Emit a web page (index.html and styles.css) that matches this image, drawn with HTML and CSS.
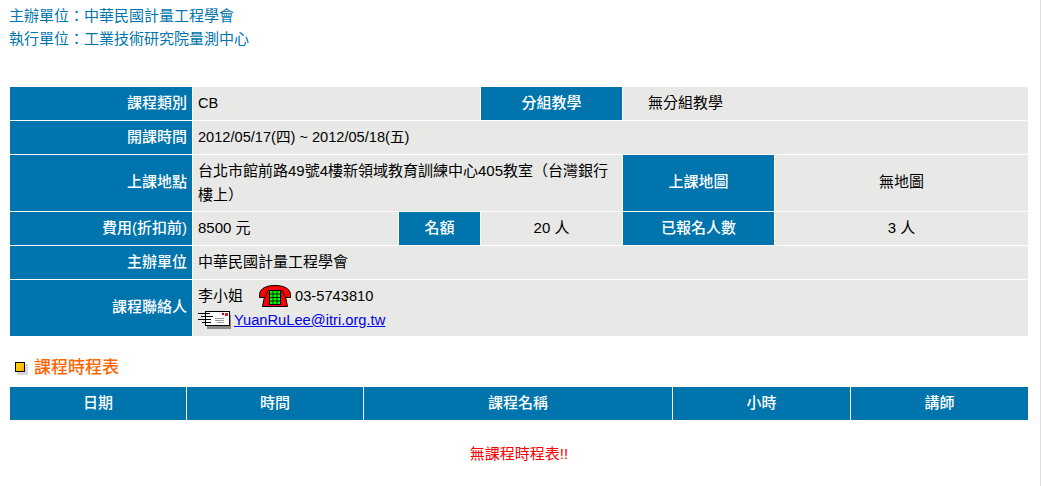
FILE: index.html
```html
<!DOCTYPE html>
<html lang="zh-Hant">
<head>
<meta charset="utf-8">
<title>課程資訊</title>
<link rel="stylesheet" href="styles.css">
</head>
<body>
<main class="page">
  <div class="org">
    <p>主辦單位：中華民國計量工程學會</p>
    <p>執行單位：工業技術研究院量測中心</p>
  </div>
  <table class="grid info">
    <colgroup>
      <col class="c1"><col class="c2"><col class="c3"><col class="c4"><col class="c5"><col class="c6">
    </colgroup>
    <tr class="r33">
      <th class="right">課程類別</th>
      <td colspan="2" class="latin">CB</td>
      <th>分組教學</th>
      <td colspan="2" class="indent">無分組教學</td>
    </tr>
    <tr class="r33">
      <th class="right">開課時間</th>
      <td colspan="5" class="latin">2012/05/17(四) ~ 2012/05/18(五)</td>
    </tr>
    <tr class="r56">
      <th class="right">上課地點</th>
      <td colspan="3" class="multi">台北市館前路49號4樓新領域教育訓練中心405教室（台灣銀行樓上）</td>
      <th>上課地圖</th>
      <td class="center">無地圖</td>
    </tr>
    <tr class="r33">
      <th class="right">費用(折扣前)</th>
      <td>8500 元</td>
      <th>名額</th>
      <td class="center">20 人</td>
      <th>已報名人數</th>
      <td class="center">3 人</td>
    </tr>
    <tr class="r33">
      <th class="right">主辦單位</th>
      <td colspan="5">中華民國計量工程學會</td>
    </tr>
    <tr class="r56">
      <th class="right">課程聯絡人</th>
      <td colspan="5" class="multi">
        <div class="contact">
          <span>李小姐</span>
          <svg class="phone" viewBox="0 0 32 22" width="32" height="22" aria-hidden="true">
            <path d="M.5 9.500 C1 3 8 .5 16 .5 C24 .5 31 3 31.500 9.500 L31.500 12.500 L24 12.500 L23 8 L9 8 L8 12.500 L.5 12.500 Z" fill="#f00" stroke="#000"/>
            <path d="M9 5.500 L23 5.500 L27 14 L28.500 21.500 L3.500 21.500 L5 14 Z" fill="#f00" stroke="#000"/>
            <rect x="10.500" y="5.500" width="11" height="14" fill="#0f0" stroke="#000"/>
            <path d="M14 6v13M18 6v13M11 9h10M11 12.500h10M11 16h10" stroke="#000" stroke-width=".8" fill="none"/>
          </svg>
          <span class="num">03-5743810</span>
        </div>
        <div class="contact mail">
          <svg class="envelope" viewBox="0 0 33 18" width="33" height="18" aria-hidden="true">
            <rect x="9" y="4" width="24" height="14" fill="#8a8a8a"/>
            <rect x="7.500" y=".5" width="24" height="14" fill="#fff" stroke="#000"/>
            <path d="M0 2.500h12M3 5.500h12M0 8.500h13M4 11.500h9" stroke="#000" fill="none"/>
            <path d="M17 7.500h9M17 9.500h9M19 11.500h7" stroke="#999" fill="none"/>
            <rect x="24" y="2" width="2" height="2" fill="#b00"/>
            <rect x="27" y="2" width="3" height="3" fill="#d22"/>
          </svg>
          <a class="num" href="#">YuanRuLee@itri.org.tw</a>
        </div>
      </td>
    </tr>
  </table>
  <h2 class="section">
    <svg class="bullet" viewBox="0 0 14 14" width="14" height="14" aria-hidden="true">
      <defs>
        <linearGradient id="gold" x1="0" y1="0" x2="1" y2="1">
          <stop offset="0" stop-color="#ffdc00"/>
          <stop offset="1" stop-color="#ffa800"/>
        </linearGradient>
      </defs>
      <rect x="3" y="3" width="11" height="11" fill="#d8d8d8"/>
      <rect x="1.500" y="1.500" width="9" height="9" fill="url(#gold)" stroke="#000"/>
    </svg>
    <span>課程時程表</span>
  </h2>
  <table class="grid schedule">
    <colgroup>
      <col class="s1"><col class="s2"><col class="s3"><col class="s4"><col class="s5">
    </colgroup>
    <tr class="r33">
      <th>日期</th><th>時間</th><th>課程名稱</th><th>小時</th><th>講師</th>
    </tr>
  </table>
  <p class="empty">無課程時程表!!</p>
</main>
</body>
</html>
```
FILE: styles.css
```css
html, body {
  margin: 0;
  padding: 0;
  background: #fff;
}
body {
  font-family: "Liberation Sans", "Noto Sans CJK TC", sans-serif;
  font-size: 15px;
  color: #000;
}
.page {
  box-sizing: border-box;
  width: 1041px;
  height: 486px;
  overflow: hidden;
  border-right: 1px solid #dedede;
  padding: 4px 0 0 10px;
}
.org {
  color: #0074ad;
  font-size: 15px;
  line-height: 23px;
  height: 82px;
  margin-left: -1px;
}
.org p { margin: 0; }
.num { font-size: 14.7px; }
.grid {
  table-layout: fixed;
  border-collapse: separate;
  border-spacing: 1px;
  width: 1020px;
  margin-left: -1px;
}
.grid th, .grid td {
  padding: 0 5px 2px;
  font-size: 15px;
  font-weight: normal;
  line-height: 24px;
  overflow: hidden;
}
.grid th {
  background: #0074ad;
  color: #fff;
  text-align: center;
  font-weight: 500;
}
.grid td { background: #e8e8e6; }
.grid td.latin { font-size: 14.6px; }
.grid th.right { text-align: right; }
.grid td.center { text-align: center; }
.grid td.indent { padding-left: 25px; }
.grid td.multi { padding-bottom: 0; }
.r33 { height: 33px; }
.r56 { height: 56px; }
.c1 { width: 182px; }
.c2 { width: 205px; }
.c3 { width: 81px; }
.c4 { width: 141px; }
.c5 { width: 151px; }
.c6 { width: 253px; }
.s1 { width: 176px; }
.s2 { width: 176px; }
.s3 { width: 308px; }
.s4 { width: 177px; }
.s5 { width: 177px; }
.contact {
  display: flex;
  align-items: center;
  height: 24px;
}
.phone { margin: 0 4px 0 16px; }
.envelope { margin-right: 3px; }
.contact a { color: #00e; }
.section {
  display: flex;
  align-items: center;
  margin: 16px 0 9px;
  height: 24px;
  font-size: 17px;
  font-weight: 500;
  color: #f60;
  padding-left: 4px;
}
.bullet { margin: 6px 6px 0 0; }
.empty {
  margin: 22px 0 0;
  text-align: center;
  width: 1018px;
  color: #f00;
  font-size: 15px;
  line-height: 22px;
}
```
